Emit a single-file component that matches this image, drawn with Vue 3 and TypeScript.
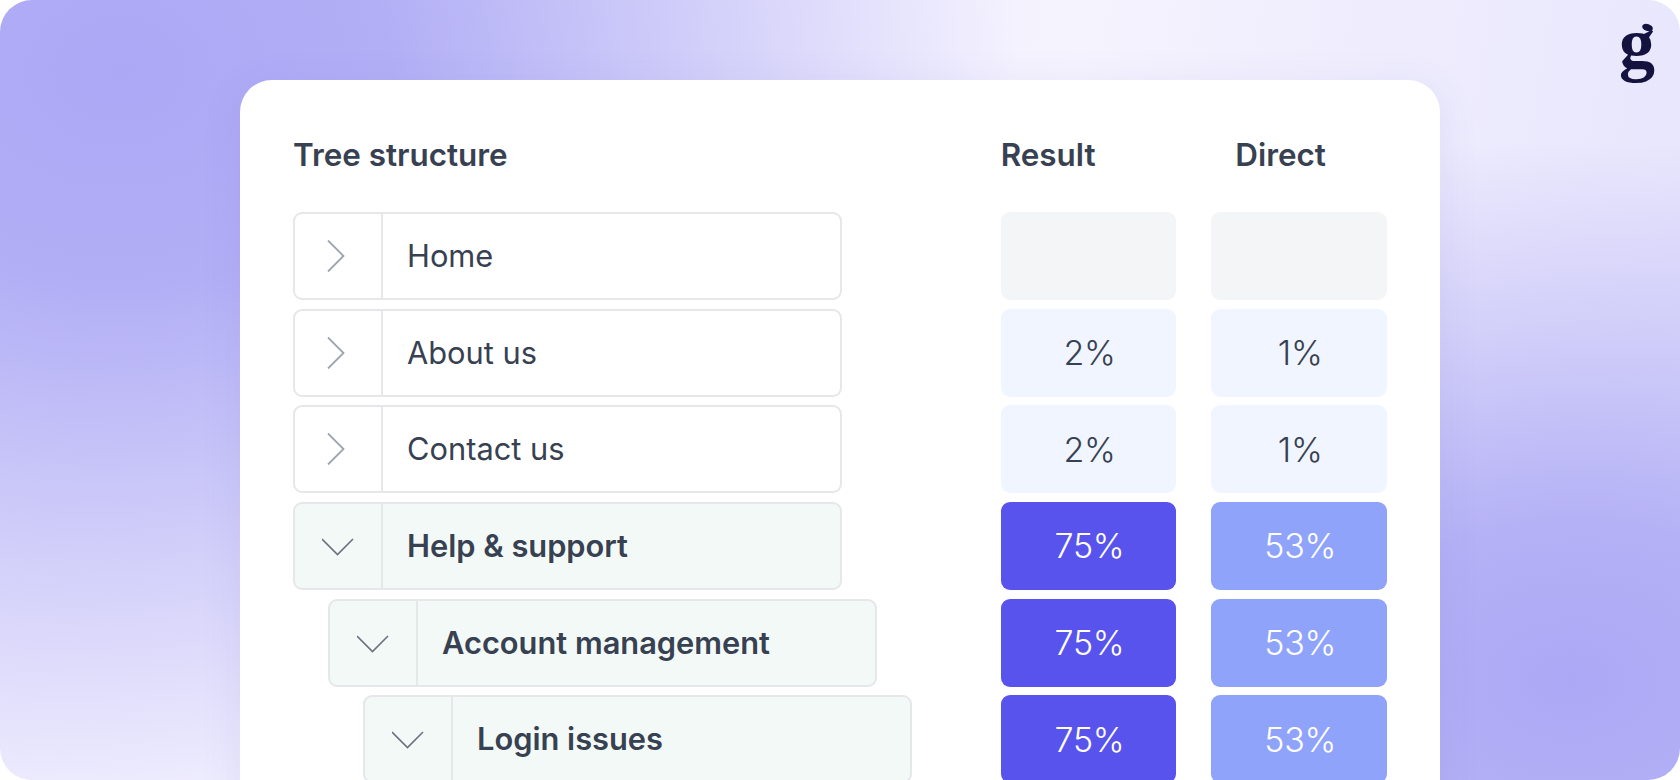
<script setup lang="ts">
interface Row {
  label: string
  depth: number
  open: boolean
  result: string
  direct: string
  tone: 'empty' | 'low' | 'high'
}

const rows: Row[] = [
  { label: 'Home', depth: 0, open: false, result: '', direct: '', tone: 'empty' },
  { label: 'About us', depth: 0, open: false, result: '2%', direct: '1%', tone: 'low' },
  { label: 'Contact us', depth: 0, open: false, result: '2%', direct: '1%', tone: 'low' },
  { label: 'Help & support', depth: 0, open: true, result: '75%', direct: '53%', tone: 'high' },
  { label: 'Account management', depth: 1, open: true, result: '75%', direct: '53%', tone: 'high' },
  { label: 'Login issues', depth: 2, open: true, result: '75%', direct: '53%', tone: 'high' },
]

function indent(depth: number) {
  return { marginLeft: `${depth * 35}px` }
}
</script>

<template>
  <div class="page">
    <div class="logo">g</div>
    <i class="logo-ear"></i>
    <div class="card">
      <div class="grid">
        <div class="head">Tree structure</div>
        <div class="head">Result</div>
        <div class="head head-direct">Direct</div>

        <template v-for="row in rows" :key="row.label">
          <div class="node" :class="{ open: row.open }" :style="indent(row.depth)">
            <div class="toggle">
              <svg v-if="row.open" width="32" height="32" viewBox="0 0 32 32" fill="none">
                <path d="M0 9 L15.5 24.5 L31 9" stroke="#6b7280" stroke-width="1.6" />
              </svg>
              <svg v-else width="32" height="32" viewBox="0 0 32 32" fill="none">
                <path d="M6 0.5 L21.5 16 L6 31.5" stroke="#9ca3af" stroke-width="1.8" />
              </svg>
            </div>
            <div class="label">{{ row.label }}</div>
          </div>
          <div class="cell result" :class="row.tone">{{ row.result }}</div>
          <div class="cell direct" :class="row.tone">{{ row.direct }}</div>
        </template>
      </div>
    </div>
  </div>
</template>

<style>
html,
body {
  margin: 0;
  background: #fff;
}
</style>

<style scoped>
.page {
  position: relative;
  box-sizing: border-box;
  width: 1680px;
  height: 780px;
  padding: 80px 240px 0;
  overflow: hidden;
  border-radius: 32px;
  font-family: Inter, "Liberation Sans", sans-serif;
  color: #374151;
  background:
    radial-gradient(760px 540px at 1570px 680px, #aca8f5 0%, rgba(172, 168, 245, 0.85) 30%, rgba(172, 168, 245, 0.4) 65%, rgba(172, 168, 245, 0) 100%),
    radial-gradient(900px 720px at 120px 70px, #aca8f5 0%, rgba(172, 168, 245, 0.9) 30%, rgba(172, 168, 245, 0.45) 65%, rgba(172, 168, 245, 0) 100%),
    linear-gradient(100deg, #ebe9fd 0%, #f5f3fe 60%, #e6e4fc 100%);
}

.logo {
  position: absolute;
  top: 8px;
  left: 1612px;
  width: 50px;
  height: 78px;
  text-align: center;
  font: 700 72px/72px "Liberation Serif", serif;
  color: #14123f;
}

.logo-ear {
  position: absolute;
  top: 24px;
  left: 1642px;
  width: 11px;
  height: 7px;
  border-radius: 50%;
  background: #14123f;
  transform: rotate(18deg);
}

.card {
  box-sizing: border-box;
  height: 800px;
  padding: 53px 53px 0 53px;
  background: #fff;
  border-radius: 32px;
  box-shadow: 0 8px 40px rgba(90, 85, 190, 0.1);
}

.grid {
  display: grid;
  grid-template-columns: 672.67px 175.67px 175.67px;
  column-gap: 35px;
  row-gap: 8.67px;
}

.head {
  height: 44px;
  margin-bottom: 26.33px;
  font-size: 31.4px;
  font-weight: 600;
  line-height: 44px;
}

.head-direct {
  padding-left: 24px;
}

.node {
  box-sizing: border-box;
  display: flex;
  width: 549px;
  height: 88px;
  background: #fff;
  border: 2px solid #e5e7eb;
  border-radius: 9px;
}

.node.open {
  background: #f3f9f7;
}

.toggle {
  flex: none;
  display: flex;
  align-items: center;
  justify-content: center;
  width: 86px;
  border-right: 2px solid #e5e7eb;
}

.label {
  padding-left: 24px;
  font-size: 30.8px;
  line-height: 84px;
}

.node.open .label {
  font-weight: 600;
}

.cell {
  display: flex;
  align-items: center;
  justify-content: center;
  padding-left: 2px;
  box-sizing: border-box;
  height: 88px;
  border-radius: 9px;
  font-size: 34px;
  font-weight: 300;
  letter-spacing: -0.3px;
}

.cell.empty {
  background: #f4f5f7;
}

.cell.low {
  background: #f0f5ff;
}

.cell.high {
  color: #fff;
}

.result.high {
  background: #5853ec;
}

.direct.high {
  background: #8fa3fb;
}
</style>
